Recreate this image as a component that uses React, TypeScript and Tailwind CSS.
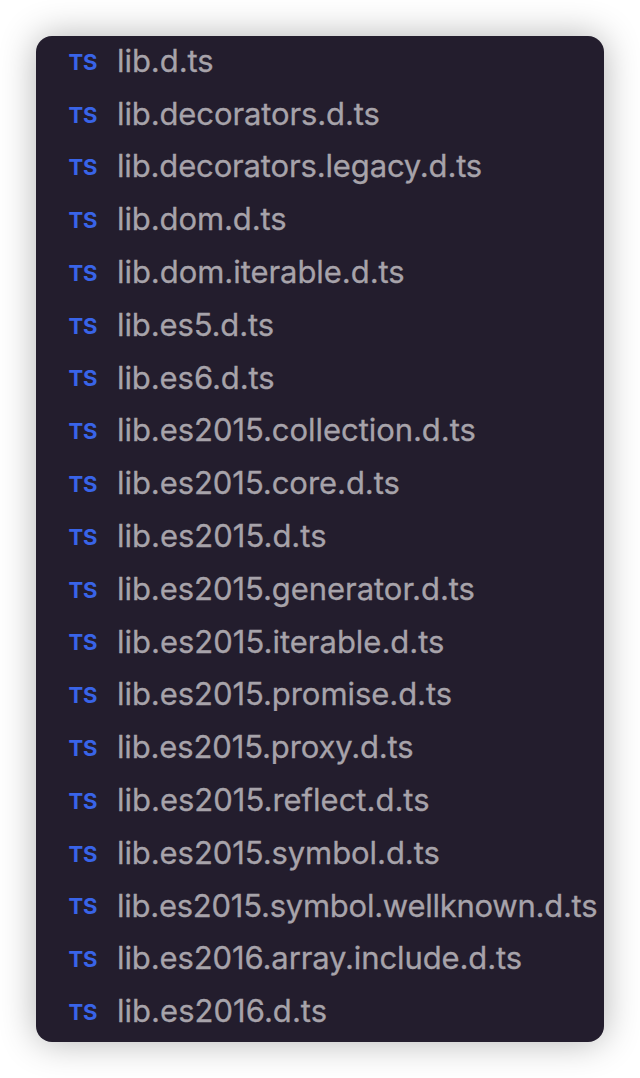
const files = [
  { name: 'lib.d.ts', tracking: -0.05 },
  { name: 'lib.decorators.d.ts', tracking: -0.11 },
  { name: 'lib.decorators.legacy.d.ts', tracking: -0.15 },
  { name: 'lib.dom.d.ts', tracking: -0.1 },
  { name: 'lib.dom.iterable.d.ts', tracking: -0.05 },
  { name: 'lib.es5.d.ts', tracking: -0.12 },
  { name: 'lib.es6.d.ts', tracking: -0.08 },
  { name: 'lib.es2015.collection.d.ts', tracking: -0.05 },
  { name: 'lib.es2015.core.d.ts', tracking: -0.06 },
  { name: 'lib.es2015.d.ts', tracking: 0 },
  { name: 'lib.es2015.generator.d.ts', tracking: -0.05 },
  { name: 'lib.es2015.iterable.d.ts', tracking: 0 },
  { name: 'lib.es2015.promise.d.ts', tracking: -0.05 },
  { name: 'lib.es2015.proxy.d.ts', tracking: -0.14 },
  { name: 'lib.es2015.reflect.d.ts', tracking: 0 },
  { name: 'lib.es2015.symbol.d.ts', tracking: -0.08 },
  { name: 'lib.es2015.symbol.wellknown.d.ts', tracking: -0.25 },
  { name: 'lib.es2016.array.include.d.ts', tracking: -0.11 },
  { name: 'lib.es2016.d.ts', tracking: 0.03 },
];

export default function App() {
  return (
    <div className="h-[1078px] w-[640px] overflow-hidden bg-white pl-9 pt-9">
      <ul className="h-[1006px] w-[568px] overflow-hidden rounded-2xl bg-[#231d2d] shadow-[0_0_36px_rgba(0,0,0,0.3)]">
        {files.map((file) => (
          <li key={file.name} className="flex h-[52.8px] items-center whitespace-nowrap pl-8">
            <span className="w-[49px] shrink-0 pl-[0.4px] pb-[0.4px] font-['Inter',sans-serif] text-[22px] font-bold text-[#3964e8]">TS</span>
            <span
              className="shrink-0 pb-[2.8px] font-['Inter',sans-serif] text-[31px] font-normal text-[#a7a3aa] [-webkit-text-stroke:0.3px_#a7a3aa]"
              style={{ letterSpacing: `${file.tracking}px` }}
            >
              {file.name}
            </span>
          </li>
        ))}
      </ul>
    </div>
  );
}
